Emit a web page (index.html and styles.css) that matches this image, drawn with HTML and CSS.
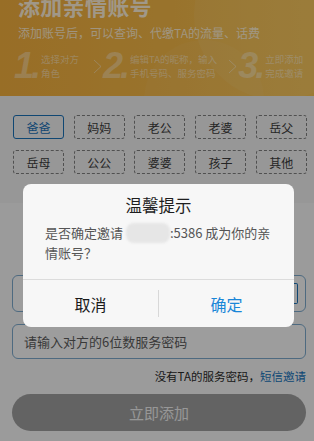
FILE: index.html
```html
<!DOCTYPE html>
<html lang="zh">
<head>
<meta charset="utf-8">
<title>添加亲情账号</title>
<link rel="stylesheet" href="styles.css">
</head>
<body>
<div class="page">
  <header class="hero">
    <div class="deco deco-a"></div>
    <div class="deco deco-b"></div>
    <h1 class="title">添加亲情账号</h1>
    <p class="sub">添加账号后，可以查询、代缴TA的流量、话费</p>
    <div class="steps">
      <div class="step s1"><span class="num">1.</span><span class="st">选择对方<br>角色</span></div>
      <svg class="chev" width="9" height="15" viewBox="0 0 9 15"><polyline points="1,1 8,7.5 1,14" fill="none" stroke="currentColor" stroke-width="1"/></svg>
      <div class="step s2"><span class="num">2.</span><span class="st">编辑TA的昵称，输入<br>手机号码、服务密码</span></div>
      <svg class="chev" width="9" height="15" viewBox="0 0 9 15"><polyline points="1,1 8,7.5 1,14" fill="none" stroke="currentColor" stroke-width="1"/></svg>
      <div class="step s3"><span class="num">3.</span><span class="st">立即添加<br>完成邀请</span></div>
    </div>
  </header>

  <section class="relations">
    <div class="rel on">爸爸</div>
    <div class="rel">妈妈</div>
    <div class="rel">老公</div>
    <div class="rel">老婆</div>
    <div class="rel">岳父</div>
    <div class="rel">岳母</div>
    <div class="rel">公公</div>
    <div class="rel">婆婆</div>
    <div class="rel">孩子</div>
    <div class="rel">其他</div>
  </section>

  <section class="form">
    <div class="field phone">
      <span class="ph"></span>
      <span class="contact"></span>
    </div>
    <div class="field pwd"><span class="ph">请输入对方的6位数服务密码</span></div>
    <p class="hint">没有TA的服务密码，<span class="link">短信邀请</span></p>
    <div class="submit">立即添加</div>
  </section>
</div>

<div class="mask"></div>

<div class="dialog">
  <div class="d-title">温馨提示</div>
  <div class="d-msg">是否确定邀请 <span class="blur"></span>:5386 成为你的亲情账号？</div>
  <div class="d-btns">
    <div class="d-btn cancel">取消</div>
    <div class="d-sep"></div>
    <div class="d-btn ok">确定</div>
  </div>
</div>
</body>
</html>
```
FILE: styles.css
```css
* { box-sizing: border-box; }
html, body { margin: 0; padding: 0; }
body {
  width: 314px;
  height: 441px;
  overflow: hidden;
  background: #f3f3f3;
  font-family: "Noto Sans CJK SC", "Noto Sans", sans-serif;
  position: relative;
}
.page { width: 314px; }

.hero {
  position: relative;
  overflow: hidden;
  height: 96px;
  padding: 0 0 0 18px;
  background: linear-gradient(90deg, #eeac3c 0%, #f0b546 55%, #f2c052 100%);
  color: #fff;
}
.deco { position: absolute; border-radius: 50%; }
.deco-a {
  width: 170px; height: 170px; right: -50px; top: -70px;
  background: rgba(255,255,255,0.06);
}
.deco-b {
  width: 120px; height: 120px; right: 50px; top: 40px;
  background: rgba(255,255,255,0.04);
}
.title {
  position: relative;
  margin: -8px 0 0;
  font-size: 22px;
  line-height: 26px;
  font-weight: 700;
  letter-spacing: 0.3px;
  color: rgba(255,255,255,0.78);
}
.sub {
  position: relative;
  margin: 7px 0 0;
  font-size: 12px;
  line-height: 16px;
  color: rgba(255,255,255,0.72);
}
.steps {
  position: relative;
  display: flex;
  align-items: center;
  margin: 10px 0 0 -4px;
  color: rgba(255,255,255,0.42);
}
.step { display: flex; align-items: center; }
.num {
  font-family: "Liberation Sans", Arial, sans-serif;
  font-style: italic;
  font-weight: 700;
  font-size: 36px;
  line-height: 30px;
  color: rgba(255,255,255,0.34);
  letter-spacing: -3px;
  margin-right: 3px;
}
.st {
  font-size: 9.5px;
  line-height: 14px;
  color: rgba(255,255,255,0.46);
}
.chev { color: rgba(255,255,255,0.4); margin: 0 1px 0 14px; }
.s2 + .chev { margin-left: 11px; }

.relations {
  display: grid;
  grid-template-columns: repeat(5, 51px);
  column-gap: 9.7px;
  row-gap: 11px;
  padding: 19px 0 29px 13px;
  background: #ececec;
}
.rel {
  height: 24px;
  border: 1px dashed #7d7d7d;
  border-radius: 3px;
  display: flex;
  align-items: center;
  justify-content: center;
  font-size: 12px;
  color: #3a3a3a;
}
.rel.on {
  border: 1.5px solid #1a6fb4;
  color: #1a6fb4;
}

.form { padding: 72px 8px 0 12px; }
.field {
  position: relative;
  height: 36px;
  border: 1px solid #7ba7c9;
  border-radius: 6px;
  display: flex;
  align-items: center;
  padding: 0 11px;
  background: #f6f6f6;
}
.phone { height: 37px; }
.contact {
  position: absolute;
  right: 7px; top: 7px;
  width: 6px; height: 21px;
  border: 1.5px solid #1a6fb4;
  border-left: none;
  border-radius: 0 2px 2px 0;
}
.pwd { margin-top: 12px; height: 35px; }
.ph { font-size: 13px; color: #5a5a5a; }
.hint {
  margin: 10px 0 0;
  text-align: right;
  font-size: 11.5px;
  line-height: 14px;
  color: #2a2a2a;
}
.link { color: #1570b8; }
.submit {
  margin-top: 11px;
  height: 37px;
  border-radius: 19px;
  background: #9c9c9c;
  display: flex;
  align-items: center;
  justify-content: center;
  font-size: 15px;
  color: #ececec;
}

.mask {
  position: absolute;
  inset: 0;
  background: rgba(0,0,0,0.36);
}

.dialog {
  position: absolute;
  left: 23px;
  top: 184px;
  width: 271px;
  height: 143px;
  background: #f7f7f7;
  border-radius: 8px;
  display: flex;
  flex-direction: column;
}
.d-title {
  text-align: center;
  font-size: 16.5px;
  line-height: 20px;
  color: #1e1e1e;
  margin-top: 11px;
}
.d-msg {
  padding: 0 22px 0 22px;
  margin-top: 8px;
  font-size: 13px;
  line-height: 19px;
  color: #555;
  height: 44px;
}
.blur {
  display: inline-block;
  width: 44px;
  height: 20px;
  vertical-align: -5px;
  border-radius: 8px;
  background: #e6e6e6;
  filter: blur(1px);
}
.d-btns {
  margin-top: 12px;
  border-top: 1px solid #dcdcdc;
  flex: 1;
  display: flex;
  align-items: center;
}
.d-btn {
  flex: 1;
  text-align: center;
  font-size: 16px;
  color: #1a1a1a;
}
.d-btn.ok { color: #1a86d8; }
.d-sep { width: 1px; height: 27px; background: #d8d8d8; }
```
